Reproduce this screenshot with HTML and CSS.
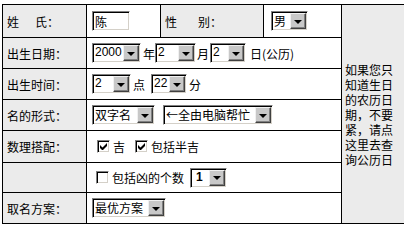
FILE: index.html
```html
<!DOCTYPE html>
<html lang="zh-CN">
<head>
    <meta charset="UTF-8">
    <title>取名</title>
    <link rel="stylesheet" href="styles.css">
</head>
<body>
    <table class="form">
        <colgroup>
            <col class="c-label">
            <col class="c-name">
            <col class="c-sexlabel">
            <col class="c-sex">
            <col class="c-side">
        </colgroup>
        <tr class="r1">
            <td class="label">姓<span class="gap"></span>氏：</td>
            <td><input type="text" class="field" value="陈"></td>
            <td class="label">性<span class="gap wide"></span>别：</td>
            <td class="sex-cell">
                <span class="sel w37"><span class="val">男</span><span class="arrow"></span></span>
            </td>
            <td class="side" rowspan="7">如果您只知道生日的农历日期，不要紧，请点这里去查询公历日</td>
        </tr>
        <tr class="r2">
            <td class="label">出生日期：</td>
            <td colspan="3">
                <div class="line">
                    <span class="sel w49"><span class="val num">2000</span><span class="arrow"></span></span>
                    <span class="ml2">年</span>
                    <span class="sel w41"><span class="val num">2</span><span class="arrow"></span></span>
                    <span class="ml1">月</span>
                    <span class="sel w36 ml1"><span class="val num">2</span><span class="arrow"></span></span>
                    <span class="ml4">日(公历)</span>
                </div>
            </td>
        </tr>
        <tr class="r3">
            <td class="label">出生时间：</td>
            <td colspan="3">
                <div class="line">
                    <span class="sel w39"><span class="val num">2</span><span class="arrow"></span></span>
                    <span class="ml2">点</span>
                    <span class="sel w36 ml6"><span class="val num">22</span><span class="arrow"></span></span>
                    <span class="ml2">分</span>
                </div>
            </td>
        </tr>
        <tr class="r4">
            <td class="label">名的形式：</td>
            <td colspan="3">
                <div class="line">
                    <span class="sel w63"><span class="val">双字名</span><span class="arrow"></span></span>
                    <span class="sel w110 ml8"><span class="val">←全由电脑帮忙</span><span class="arrow"></span></span>
                </div>
            </td>
        </tr>
        <tr class="r5">
            <td class="label">数理搭配：</td>
            <td colspan="3">
                <div class="line">
                    <span class="check on ml5"><svg width="7" height="7" viewBox="0 0 7 7"><path d="M0 2v3l2 2h1l4-4V0L2.5 4.5z"/></svg></span>
                    <span class="ml3">吉</span>
                    <span class="check on ml10"><svg width="7" height="7" viewBox="0 0 7 7"><path d="M0 2v3l2 2h1l4-4V0L2.5 4.5z"/></svg></span>
                    <span class="ml3">包括半吉</span>
                </div>
            </td>
        </tr>
        <tr class="r6">
            <td class="label"></td>
            <td colspan="3">
                <div class="line">
                    <span class="check ml4"></span>
                    <span class="ml3">包括凶的个数</span>
                    <span class="sel w37 ml6"><span class="val num bold">1</span><span class="arrow"></span></span>
                </div>
            </td>
        </tr>
        <tr class="r7">
            <td class="label">取名方案：</td>
            <td colspan="3">
                <div class="line">
                    <span class="sel w74"><span class="val">最优方案</span><span class="arrow"></span></span>
                </div>
            </td>
        </tr>
    </table>
</body>
</html>
```

FILE: styles.css
```css
html, body {
    margin: 0;
    background: #fff;
    overflow: hidden;
}
body {
    font: 12px/15px "Noto Sans CJK SC", sans-serif;
    color: #000;
}
.form {
    border-collapse: collapse;
    table-layout: fixed;
    width: 402px;
    margin: 4px 0 0 2px;
}
.c-label { width: 84px; }
.c-name { width: 74px; }
.c-sexlabel { width: 103px; }
.c-sex { width: 78px; }
.c-side { width: 63px; }

.r1 { height: 33px; }
.r2, .r3, .r4, .r7 { height: 31px; }
.r5 { height: 32px; }
.r6 { height: 30px; }

.form td {
    border: 1px solid #000;
    padding: 0 0 0 5px;
    vertical-align: middle;
    white-space: nowrap;
}
.form td.label {
    background: #ebebeb;
    padding-left: 4px;
}
.form td.sex-cell {
    padding-left: 7px;
}
.form td.side {
    background: #ebebeb;
    border-right: none;
    white-space: normal;
    padding: 0 8px 0 3px;
    line-height: 15px;
}
.gap {
    display: inline-block;
    width: 16px;
}
.gap.wide {
    width: 21px;
}

.line {
    display: flex;
    align-items: center;
}

.field {
    display: block;
    box-sizing: border-box;
    width: 38px;
    height: 20px;
    margin: 0;
    padding: 0 0 0 2px;
    font: 12px "Noto Sans CJK SC", sans-serif;
    color: #000;
    background: #fff;
    border: 1px solid;
    border-color: #808080 #fff #fff #808080;
    box-shadow: inset 1px 1px #000, inset -1px -1px #d4d0c8;
    outline: none;
}

.sel {
    display: inline-flex;
    box-sizing: border-box;
    height: 20px;
    padding: 1px;
    background: #fff;
    border: 1px solid;
    border-color: #808080 #fff #fff #808080;
    box-shadow: inset 1px 1px #000, inset -1px -1px #d4d0c8;
}
.sel .val {
    flex: 1;
    padding-left: 1px;
    line-height: 15px;
    overflow: hidden;
}
.sel .val.num {
    font-family: "Liberation Sans", sans-serif;
}
.sel .val.bold {
    font-weight: bold;
    padding-left: 4px;
}
.sel .arrow {
    flex: none;
    width: 16px;
    box-sizing: border-box;
    background: #c8c8c8;
    border: 1px solid;
    border-color: #f0f0f0 #404040 #404040 #f0f0f0;
    box-shadow: inset -1px -1px #808080;
    display: flex;
    align-items: center;
    justify-content: center;
}
.sel .arrow::after {
    content: "";
    border: 4px solid transparent;
    border-top: 4px solid #000;
    border-bottom: 0;
    margin-top: 1px;
}
.w36 { width: 36px; }
.w37 { width: 37px; }
.w39 { width: 39px; }
.w41 { width: 41px; }
.w49 { width: 49px; }
.w63 { width: 63px; }
.w74 { width: 74px; }
.w110 { width: 110px; }

.check {
    display: inline-flex;
    align-items: center;
    justify-content: center;
    box-sizing: border-box;
    width: 13px;
    height: 13px;
    background: #fff;
    border: 1px solid;
    border-color: #808080 #fff #fff #808080;
    box-shadow: inset 1px 1px #000, inset -1px -1px #d4d0c8;
}
.check svg {
    display: block;
    fill: #000;
}

.ml1 { margin-left: 1px; }
.ml2 { margin-left: 2px; }
.ml3 { margin-left: 3px; }
.ml4 { margin-left: 4px; }
.ml5 { margin-left: 5px; }
.ml6 { margin-left: 6px; }
.ml8 { margin-left: 8px; }
.ml10 { margin-left: 10px; }
```
